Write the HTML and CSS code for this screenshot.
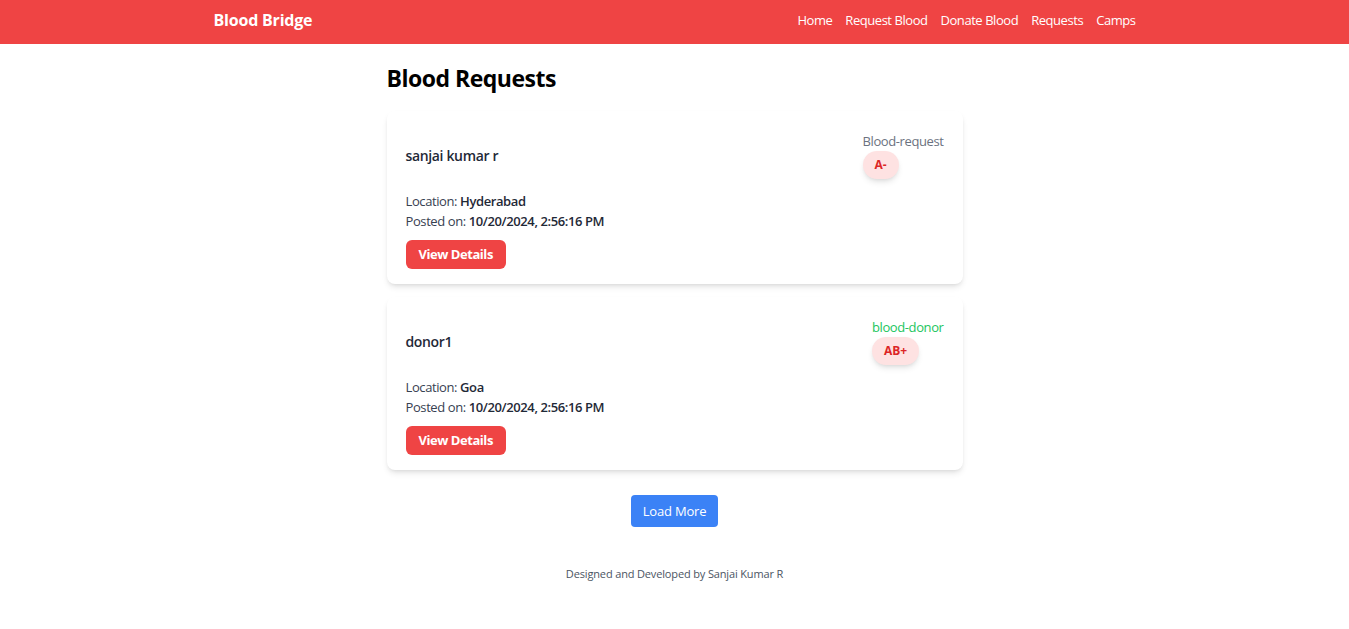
FILE: index.html
```html
<!DOCTYPE html>
<html lang="en">
<head>
<meta charset="utf-8">
<title>Blood Bridge</title>
<link rel="stylesheet" href="styles.css">
</head>
<body>
<nav class="navbar">
  <div class="nav-inner">
    <a class="brand" href="#">Blood Bridge</a>
    <div class="nav-links">
      <a href="#">Home</a>
      <a href="#">Request Blood</a>
      <a href="#">Donate Blood</a>
      <a href="#">Requests</a>
      <a href="#">Camps</a>
    </div>
  </div>
</nav>
<main class="main">
  <h1 class="title">Blood Requests</h1>
  <div class="card">
    <div class="card-head">
      <div class="name">sanjai kumar r</div>
      <div class="meta">
        <div class="type type-request">Blood-request</div>
        <span class="badge">A-</span>
      </div>
    </div>
    <div class="info">
      <div>Location: <b>Hyderabad</b></div>
      <div>Posted on: <b>10/20/2024, 2:56:16 PM</b></div>
    </div>
    <button class="btn-view">View Details</button>
  </div>
  <div class="card">
    <div class="card-head">
      <div class="name">donor1</div>
      <div class="meta">
        <div class="type type-donor">blood-donor</div>
        <span class="badge">AB+</span>
      </div>
    </div>
    <div class="info">
      <div>Location: <b>Goa</b></div>
      <div>Posted on: <b>10/20/2024, 2:56:16 PM</b></div>
    </div>
    <button class="btn-view">View Details</button>
  </div>
  <div class="more-wrap">
    <button class="btn-more">Load More</button>
  </div>
</main>
<footer class="footer">Designed and Developed by Sanjai Kumar R</footer>
</body>
</html>
```
FILE: styles.css
```css
* { box-sizing: border-box; }
html, body { margin: 0; padding: 0; }
body {
  font-family: "Open Sans", "Noto Sans", sans-serif;
  background: #ffffff;
  color: #111827;
}
a { text-decoration: none; color: inherit; }
.navbar {
  background: #ef4444;
  height: 44px;
}
.nav-inner {
  max-width: 922px;
  margin: 0 auto;
  height: 100%;
  padding-bottom: 4px;
  display: flex;
  align-items: center;
  justify-content: space-between;
  color: #ffffff;
}
.brand {
  font-size: 16px;
  font-weight: 700;
  letter-spacing: -0.2px;
}
.nav-links {
  display: flex;
  gap: 13px;
  font-size: 13px;
  letter-spacing: -0.45px;
}
.main {
  width: 576px;
  margin: 0 auto;
  padding-top: 16px;
}
.title {
  margin: 0 0 15px 0;
  font-size: 23px;
  font-weight: 700;
  line-height: 36px;
  color: #000000;
  letter-spacing: -0.5px;
}
.card {
  background: #ffffff;
  border-radius: 8px;
  box-shadow: 0 4px 6px -1px rgba(0,0,0,0.1), 0 2px 4px -2px rgba(0,0,0,0.1);
  padding: 20px 19px 15px 19px;
  margin-bottom: 13px;
}
.card-head {
  display: flex;
  justify-content: space-between;
  align-items: center;
}
.name {
  font-size: 14px;
  font-weight: 600;
  color: #1f2937;
  letter-spacing: -0.35px;
}
.meta {
  display: flex;
  flex-direction: column;
  align-items: flex-start;
}
.type {
  font-size: 13px;
  line-height: 20px;
  letter-spacing: -0.4px;
}
.type-request { color: #6b7280; }
.type-donor { color: #22c55e; }
.badge {
  display: inline-block;
  background: #fee2e2;
  color: #dc2626;
  font-size: 12px;
  font-weight: 700;
  line-height: 16px;
  padding: 6px 12px;
  border-radius: 9999px;
  box-shadow: 0 4px 6px -1px rgba(0,0,0,0.1), 0 2px 4px -2px rgba(0,0,0,0.1);
}
.info {
  margin-top: 12px;
  font-size: 13px;
  line-height: 20px;
  color: #374151;
  letter-spacing: -0.4px;
}
.info b {
  font-weight: 600;
  color: #1f2937;
}
.btn-view {
  display: block;
  margin-top: 9px;
  background: #ef4444;
  color: #ffffff;
  border: none;
  border-radius: 6px;
  font-family: inherit;
  font-size: 13px;
  font-weight: 700;
  line-height: 21px;
  padding: 4px 13px;
  letter-spacing: -0.45px;
}
.more-wrap {
  display: flex;
  justify-content: center;
  margin-top: 25px;
}
.btn-more {
  background: #3b82f6;
  color: #ffffff;
  border: none;
  border-radius: 4px;
  font-family: inherit;
  font-size: 13px;
  line-height: 20px;
  padding: 6px 12px;
  letter-spacing: -0.2px;
}
.footer {
  text-align: center;
  margin-top: 39px;
  font-size: 11px;
  color: #4b5563;
  letter-spacing: -0.15px;
}
```
